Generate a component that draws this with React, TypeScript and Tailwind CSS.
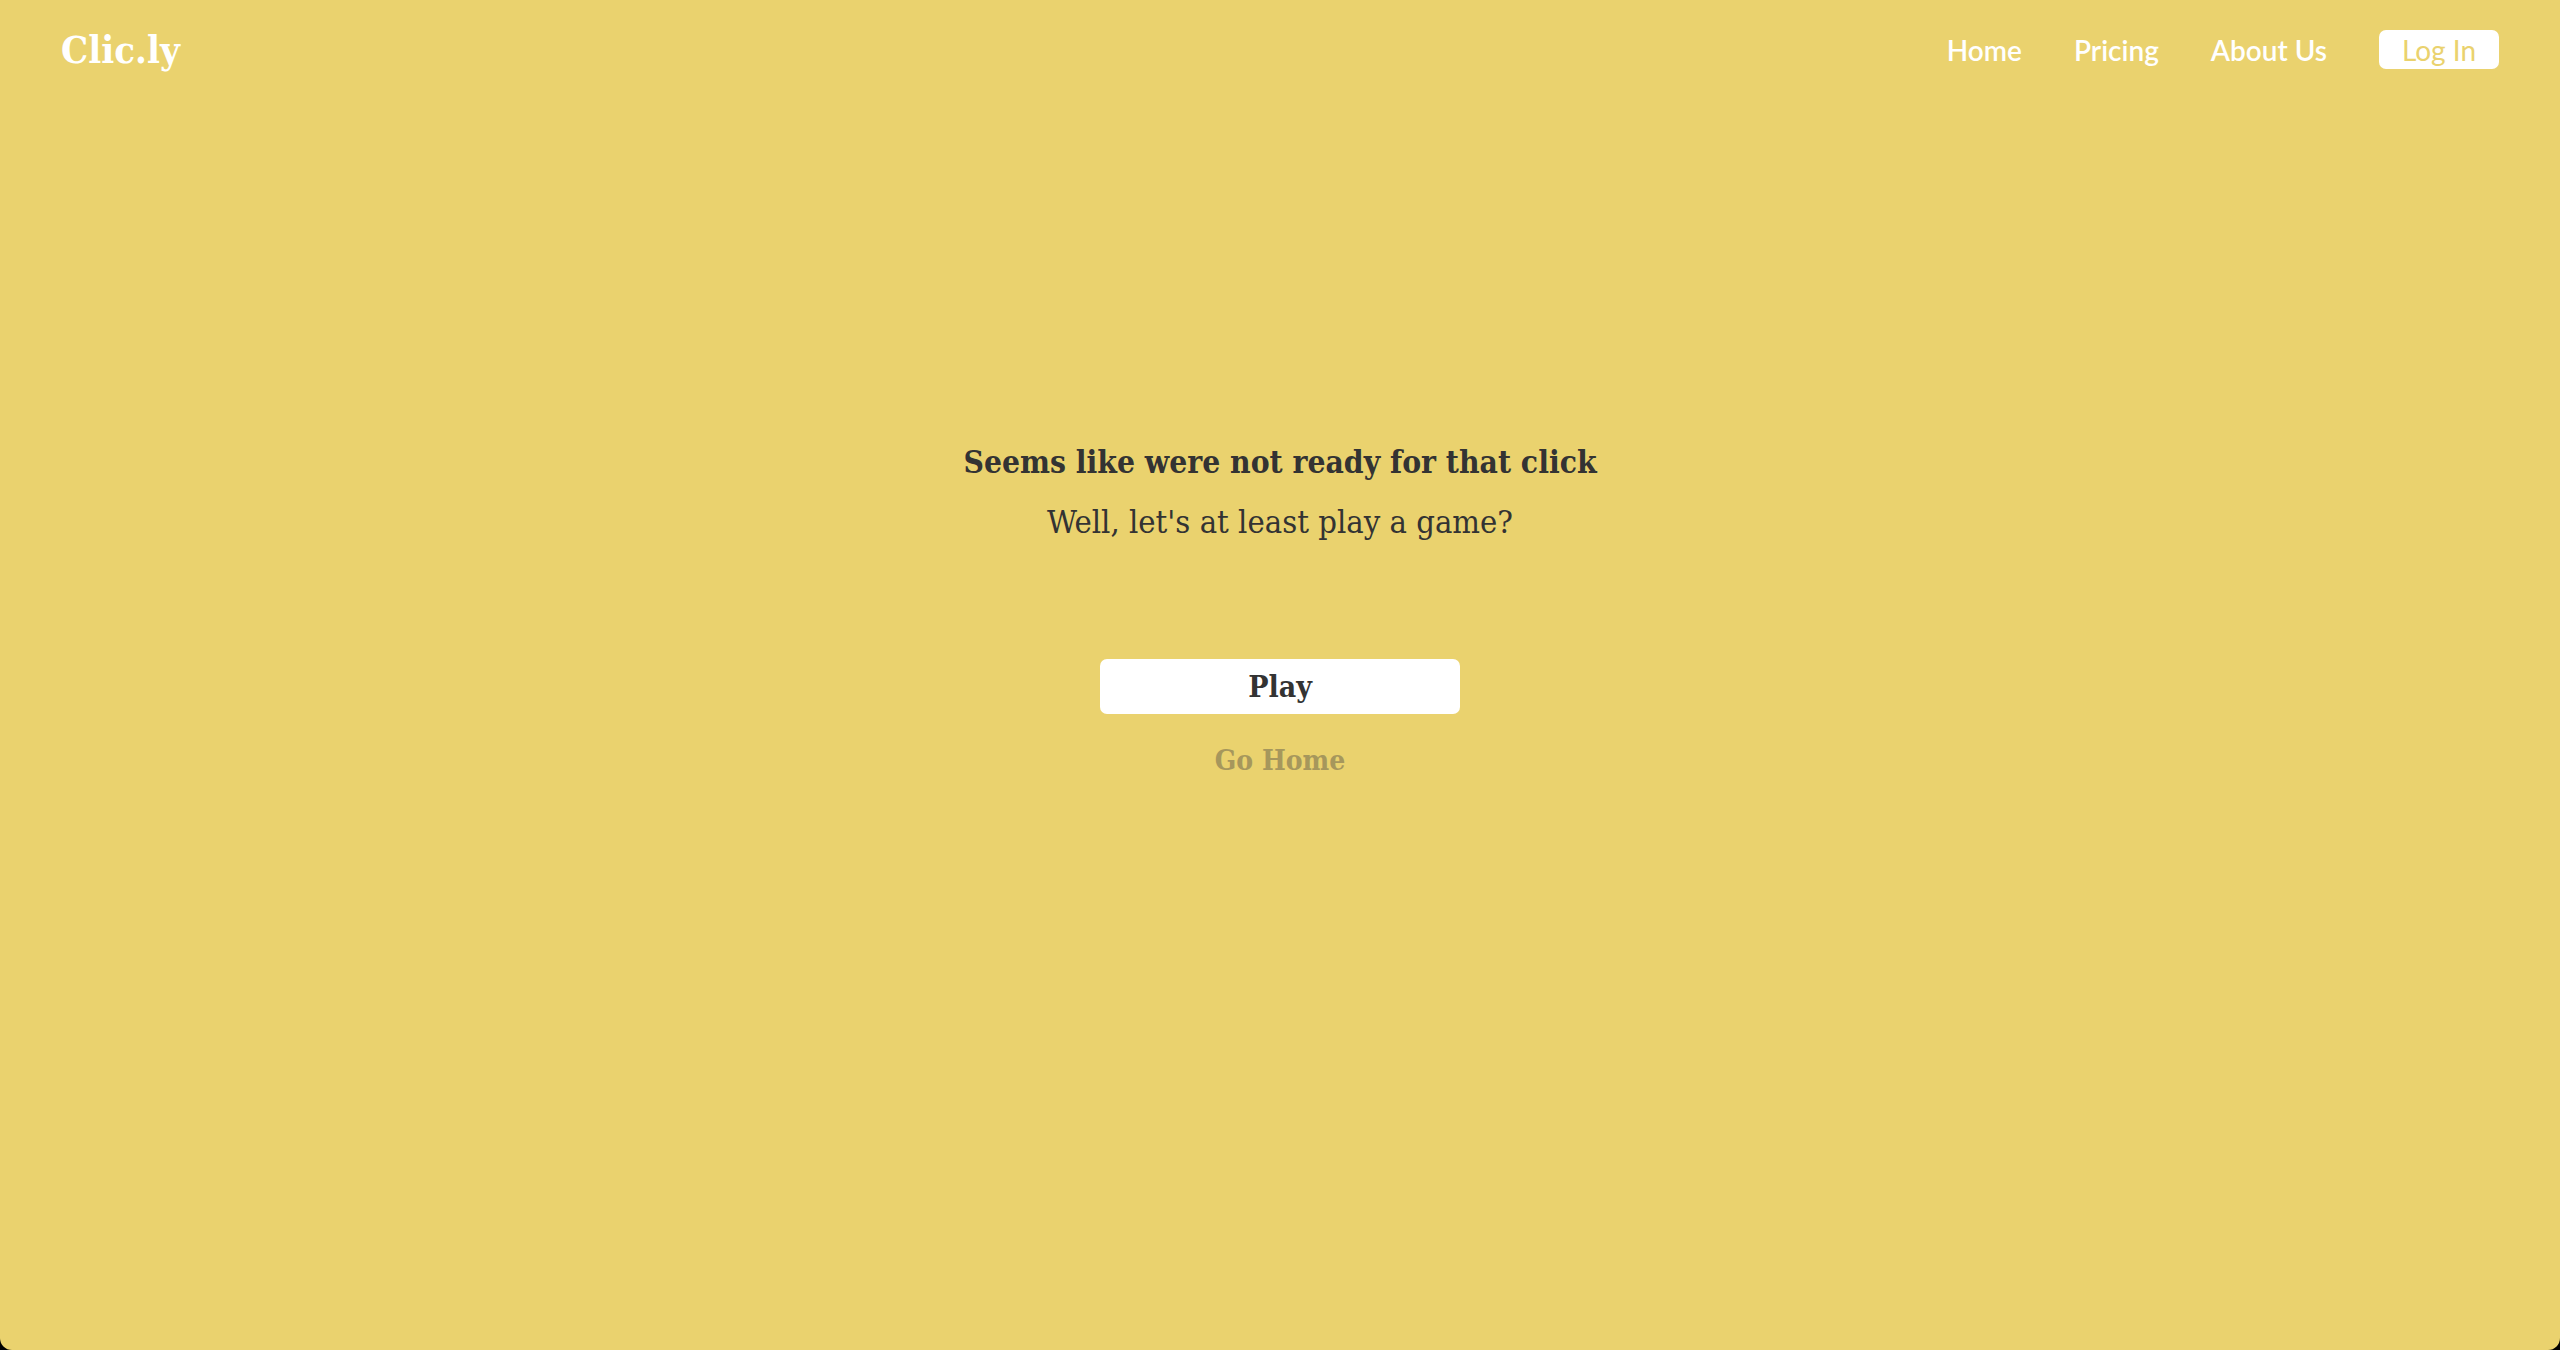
import React from "react";

const serif = { fontFamily: '"DejaVu Serif Condensed", "DejaVu Serif", serif' };
const sans = { fontFamily: 'Lato, "Noto Sans", sans-serif' };

export default function App() {
  return (
    <div className="w-full h-[1350px] bg-black">
      <div className="h-full w-full bg-[#EAD26E] rounded-b-[12px] flex flex-col">
        <header className="h-[99px] flex items-center justify-between pl-[61px] pr-[61px]">
          <div className="text-[38px] leading-none text-white font-bold" style={serif}>
            Clic.ly
          </div>
          <nav className="flex items-center gap-[52px] text-white text-[28px] font-semibold" style={sans}>
            <a className="leading-none">Home</a>
            <a className="leading-none">Pricing</a>
            <a className="leading-none">About Us</a>
            <button className="w-[120px] h-[39px] bg-white rounded-[7px] text-[#EAD26E] font-normal text-[28px] leading-none">
              Log In
            </button>
          </nav>
        </header>
        <main className="flex flex-col items-center text-[#333333]" style={serif}>
          <h1 className="mt-[343px] text-[31.5px] leading-[40px] font-bold">Seems like were not ready for that click</h1>
          <p className="mt-[20px] text-[32.5px] leading-[40px]">Well, let's at least play a game?</p>
          <button className="mt-[117px] w-[360px] h-[55px] bg-white rounded-[7px] text-[30px] font-bold text-[#333333]" style={serif}>
            Play
          </button>
          <a className="mt-[29px] text-[28px] leading-[36px] font-bold text-[#A6975C]">Go Home</a>
        </main>
      </div>
    </div>
  );
}
